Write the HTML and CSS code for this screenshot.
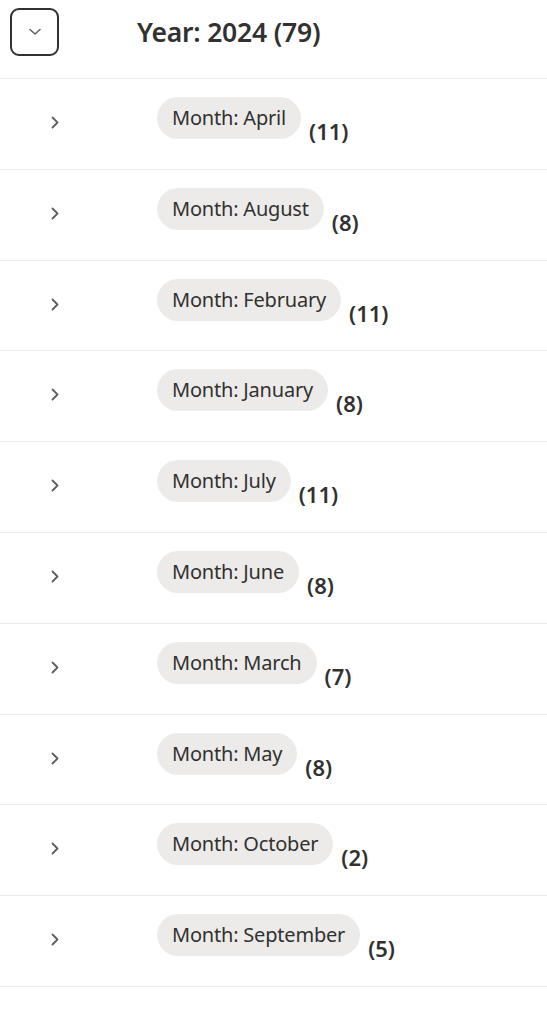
FILE: index.html
```html
<!DOCTYPE html>
<html>
<head>
<meta charset="utf-8">
<link rel="stylesheet" href="styles.css">
</head>
<body>
<div class="list">
  <div class="header">
    <button class="toggle" aria-label="Collapse">
      <svg width="12" height="8" viewBox="0 0 12 8"><path d="M1 1.5 L6 6 L11 1.5" fill="none" stroke="#605e5c" stroke-width="1.5" stroke-linecap="round" stroke-linejoin="round"/></svg>
    </button>
    <div class="title">Year: 2024 (79)</div>
  </div>
  <div class="row"><span class="chev"><svg width="8" height="13" viewBox="0 0 8 13"><path d="M1.5 1.5 L6.5 6.5 L1.5 11.5" fill="none" stroke="#605e5c" stroke-width="1.8" stroke-linecap="round" stroke-linejoin="round"/></svg></span><span class="pill">Month: April</span><span class="count">(11)</span></div>
  <div class="row"><span class="chev"><svg width="8" height="13" viewBox="0 0 8 13"><path d="M1.5 1.5 L6.5 6.5 L1.5 11.5" fill="none" stroke="#605e5c" stroke-width="1.8" stroke-linecap="round" stroke-linejoin="round"/></svg></span><span class="pill">Month: August</span><span class="count">(8)</span></div>
  <div class="row"><span class="chev"><svg width="8" height="13" viewBox="0 0 8 13"><path d="M1.5 1.5 L6.5 6.5 L1.5 11.5" fill="none" stroke="#605e5c" stroke-width="1.8" stroke-linecap="round" stroke-linejoin="round"/></svg></span><span class="pill">Month: February</span><span class="count">(11)</span></div>
  <div class="row"><span class="chev"><svg width="8" height="13" viewBox="0 0 8 13"><path d="M1.5 1.5 L6.5 6.5 L1.5 11.5" fill="none" stroke="#605e5c" stroke-width="1.8" stroke-linecap="round" stroke-linejoin="round"/></svg></span><span class="pill">Month: January</span><span class="count">(8)</span></div>
  <div class="row"><span class="chev"><svg width="8" height="13" viewBox="0 0 8 13"><path d="M1.5 1.5 L6.5 6.5 L1.5 11.5" fill="none" stroke="#605e5c" stroke-width="1.8" stroke-linecap="round" stroke-linejoin="round"/></svg></span><span class="pill">Month: July</span><span class="count">(11)</span></div>
  <div class="row"><span class="chev"><svg width="8" height="13" viewBox="0 0 8 13"><path d="M1.5 1.5 L6.5 6.5 L1.5 11.5" fill="none" stroke="#605e5c" stroke-width="1.8" stroke-linecap="round" stroke-linejoin="round"/></svg></span><span class="pill">Month: June</span><span class="count">(8)</span></div>
  <div class="row"><span class="chev"><svg width="8" height="13" viewBox="0 0 8 13"><path d="M1.5 1.5 L6.5 6.5 L1.5 11.5" fill="none" stroke="#605e5c" stroke-width="1.8" stroke-linecap="round" stroke-linejoin="round"/></svg></span><span class="pill">Month: March</span><span class="count">(7)</span></div>
  <div class="row"><span class="chev"><svg width="8" height="13" viewBox="0 0 8 13"><path d="M1.5 1.5 L6.5 6.5 L1.5 11.5" fill="none" stroke="#605e5c" stroke-width="1.8" stroke-linecap="round" stroke-linejoin="round"/></svg></span><span class="pill">Month: May</span><span class="count">(8)</span></div>
  <div class="row"><span class="chev"><svg width="8" height="13" viewBox="0 0 8 13"><path d="M1.5 1.5 L6.5 6.5 L1.5 11.5" fill="none" stroke="#605e5c" stroke-width="1.8" stroke-linecap="round" stroke-linejoin="round"/></svg></span><span class="pill">Month: October</span><span class="count">(2)</span></div>
  <div class="row"><span class="chev"><svg width="8" height="13" viewBox="0 0 8 13"><path d="M1.5 1.5 L6.5 6.5 L1.5 11.5" fill="none" stroke="#605e5c" stroke-width="1.8" stroke-linecap="round" stroke-linejoin="round"/></svg></span><span class="pill">Month: September</span><span class="count">(5)</span></div>
</div>
</body>
</html>
```
FILE: styles.css
```css
html, body {
  margin: 0;
  padding: 0;
  background: #ffffff;
}
body {
  font-family: "Noto Sans", "Open Sans", sans-serif;
  color: #323130;
}
.list {
  display: flex;
  flex-direction: column;
}
.header {
  display: flex;
  align-items: center;
  height: 79px;
  border-bottom: 1px solid #edebe9;
  box-sizing: border-box;
  padding-left: 10px;
}
.toggle {
  width: 49px;
  height: 48px;
  box-sizing: border-box;
  border: 2.5px solid #323130;
  border-radius: 9px;
  background: #fff;
  display: flex;
  align-items: center;
  justify-content: center;
  padding: 0;
  margin-top: -15px;
}
.title {
  margin-left: 78px;
  margin-top: -14px;
  font-size: 26.5px;
  font-weight: 600;
  letter-spacing: -0.2px;
}
.row {
  display: flex;
  align-items: flex-start;
  height: 90.8px;
  border-bottom: 1px solid #edebe9;
  padding-top: 18px;
  box-sizing: border-box;
}
.chev {
  width: 8px;
  margin-left: 51px;
  margin-top: 19px;
  display: flex;
}
.pill {
  margin-left: 98px;
  height: 42px;
  line-height: 42px;
  padding: 0 15px;
  border-radius: 21px;
  background: #edebe9;
  font-size: 20px;
  letter-spacing: -0.2px;
}
.count {
  margin-left: 8px;
  margin-top: 20px;
  font-size: 22px;
  font-weight: 600;
  line-height: 28px;
}
```
